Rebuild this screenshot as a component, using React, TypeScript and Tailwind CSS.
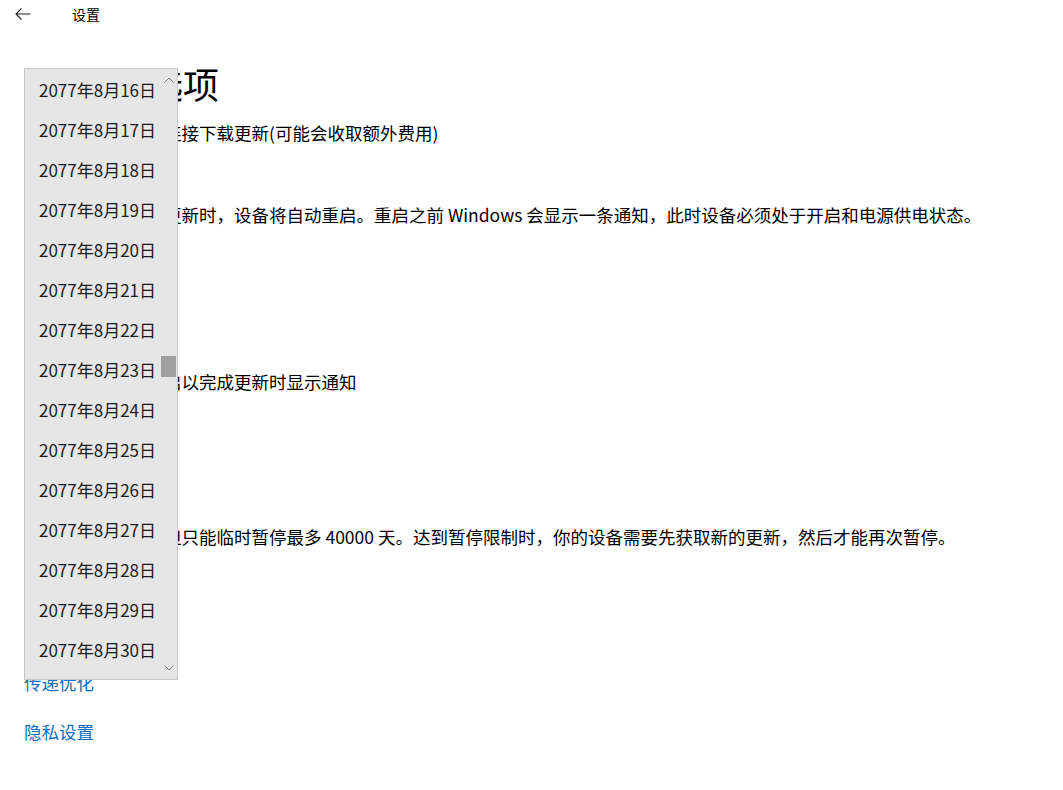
import React from 'react'

const dates = Array.from({ length: 15 }, (_, i) => `2077年8月${16 + i}日`)

function Toggle() {
  return (
    <div className="flex items-center gap-3">
      <div className="w-[44px] h-[20px] rounded-full border-2 border-[#333] flex items-center px-[3px]">
        <div className="w-[10px] h-[10px] rounded-full bg-[#333]" />
      </div>
      <span className="text-[17px]">关</span>
    </div>
  )
}

function Chevron({ up }: { up?: boolean }) {
  return (
    <svg width="10" height="6" viewBox="0 0 10 6" className="text-[#7d7d7d]">
      <path d={up ? 'M0.5 5.5 L5 1 L9.5 5.5' : 'M0.5 0.5 L5 5 L9.5 0.5'} fill="none" stroke="currentColor" strokeWidth="1" />
    </svg>
  )
}

function DateList() {
  return (
    <div className="absolute left-[24px] top-[68px] w-[154px] h-[612px] border border-[#c8c8c8] bg-[#e6e6e6]">
      <div className="pt-[1px]">
        {dates.map(d => (
          <div key={d} className="h-10 pl-[14px] flex items-center text-[17px] text-[#1c1c1c]">
            {d}
          </div>
        ))}
      </div>
      <div className="absolute right-0 top-0 bottom-0 w-[17px] flex flex-col items-center">
        <div className="h-[22px] flex items-center justify-center">
          <Chevron up />
        </div>
        <div className="flex-1">
          <div className="mt-[265px] h-[21px] w-[15px] bg-[#a0a0a0]" />
        </div>
        <div className="h-[22px] flex items-center justify-center">
          <Chevron />
        </div>
      </div>
    </div>
  )
}

export default function App() {
  return (
    <div className="relative w-[1063px] h-[790px] bg-white text-black overflow-hidden font-['Noto_Sans_CJK_SC','Noto_Sans',sans-serif]">
      {/* title bar */}
      <div className="h-[28px] flex items-center">
        <svg width="16" height="12" viewBox="0 0 16 12" className="ml-[15px]">
          <path d="M15.5 6 H1 M6.5 0.5 L1 6 L6.5 11.5" fill="none" stroke="#222" strokeWidth="1.1" />
        </svg>
        <span className="ml-[41px] text-[14px]">设置</span>
      </div>

      <div className="pl-[24px]">
        <div className="mt-[30px] h-[50px] flex items-center">
          <h1 className="ml-[51px] text-[36px] font-normal">高级选项</h1>
        </div>

        <div className="h-[50px] flex items-center text-[17.5px]">
          通过按流量计费的连接下载更新(可能会收取额外费用)
        </div>
        <div className="h-[32px] flex items-center"><Toggle /></div>

        <div className="h-[50px] flex items-center text-[17.5px]">
          在需要重启以安装更新时，设备将自动重启。重启之前 Windows 会显示一条通知，此时设备必须处于开启和电源供电状态。
        </div>
        <div className="h-[50px] flex items-center"><Toggle /></div>

        <div className="h-[67px] flex items-end pb-2 text-[20px] font-bold">更新通知</div>
        <div className="h-[50px] flex items-center text-[17.5px]">
          当你的电脑需要重启以完成更新时显示通知
        </div>
        <div className="h-[40px] flex items-center"><Toggle /></div>

        <div className="h-[65px] flex items-end pb-2 text-[20px] font-bold">暂停更新</div>
        <div className="h-[50px] flex items-center text-[17.5px]">
          你可以暂停更新，但只能临时暂停最多 40000 天。达到暂停限制时，你的设备需要先获取新的更新，然后才能再次暂停。
        </div>
        <div className="h-[38px] flex items-center text-[17px]">暂停截止日期</div>
        <div className="h-[58px]">
          <div className="w-[150px] h-[34px] border-2 border-[#999] flex items-center px-2 text-[17px]">选择日期</div>
        </div>

        <div className="h-[50px] flex items-center text-[17.5px] text-[#0f6fc1]">传递优化</div>
        <div className="h-[48px] flex items-center text-[17.5px] text-[#0f6fc1]">隐私设置</div>
      </div>

      <DateList />
    </div>
  )
}
